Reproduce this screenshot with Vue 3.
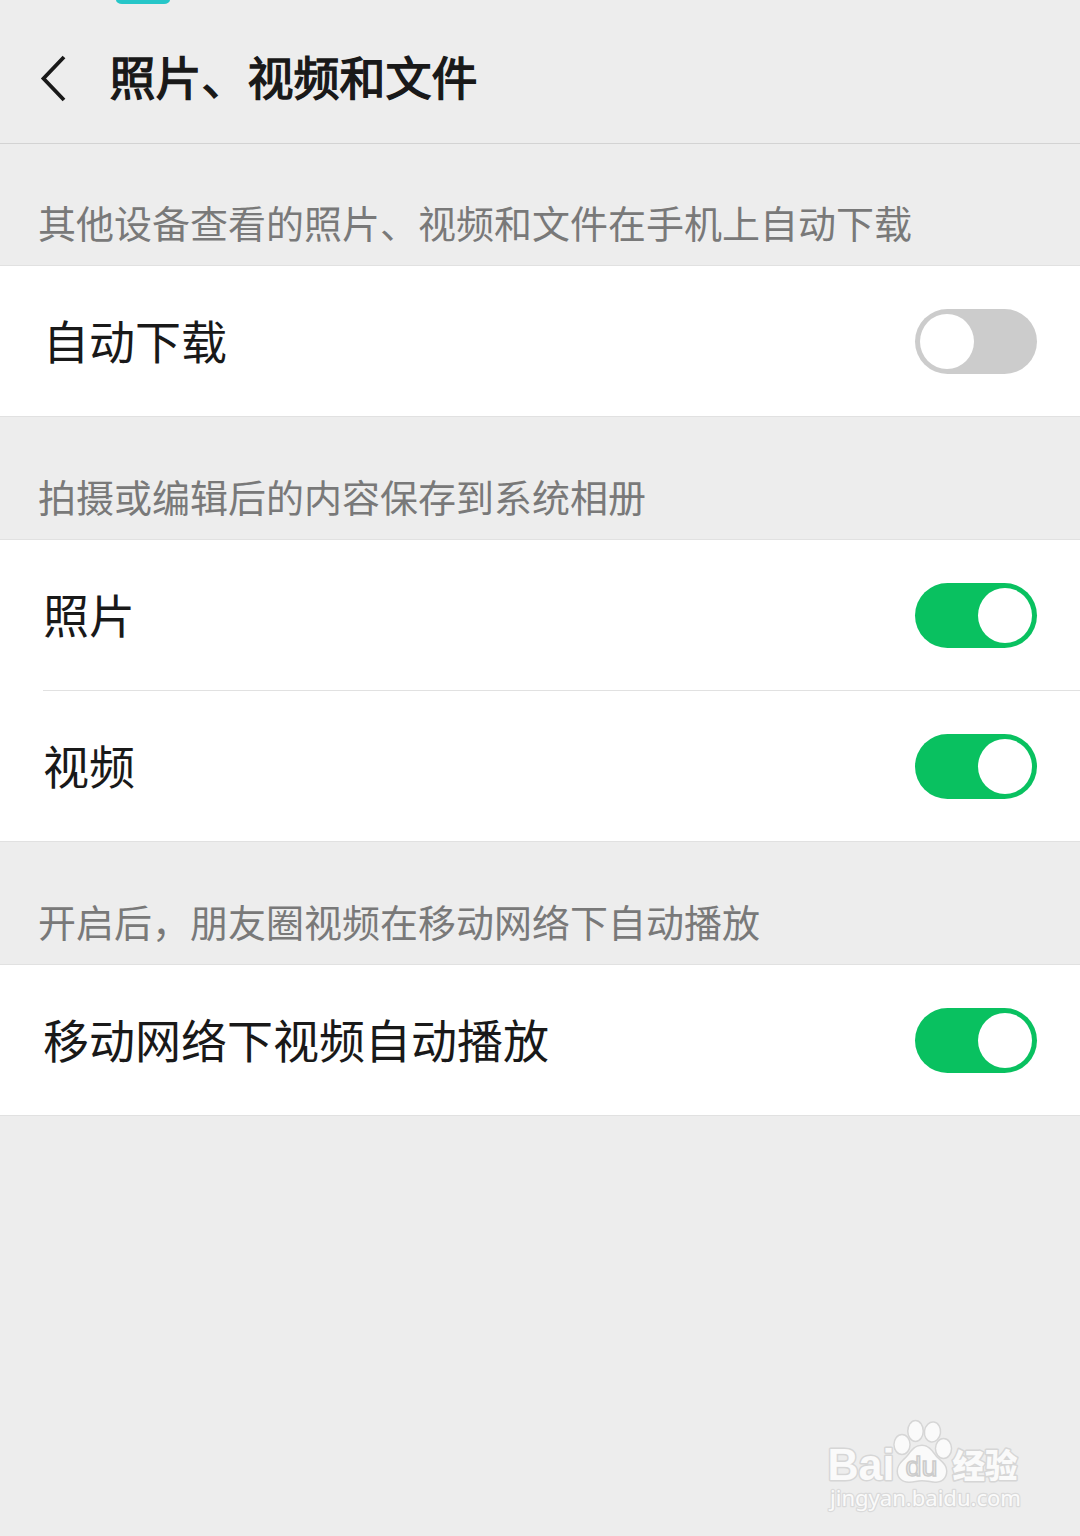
<script setup>
import { ref } from 'vue'

const groups = ref([
  {
    hint: '其他设备查看的照片、视频和文件在手机上自动下载',
    items: [{ label: '自动下载', on: false }],
  },
  {
    hint: '拍摄或编辑后的内容保存到系统相册',
    items: [
      { label: '照片', on: true },
      { label: '视频', on: true },
    ],
  },
  {
    hint: '开启后，朋友圈视频在移动网络下自动播放',
    items: [{ label: '移动网络下视频自动播放', on: true }],
  },
])
</script>

<template>
  <div class="page">
    <div class="notch"></div>
    <header class="header">
      <svg class="back" width="28" height="48" viewBox="0 0 28 48">
        <path d="M25 2 L4.5 23.5 L25 45" />
      </svg>
      <h1>照片、视频和文件</h1>
    </header>

    <section v-for="group in groups" :key="group.hint">
      <p class="hint">{{ group.hint }}</p>
      <ul class="list">
        <li v-for="item in group.items" :key="item.label" class="row">
          <span class="label">{{ item.label }}</span>
          <button
            class="switch"
            :class="{ on: item.on }"
            role="switch"
            :aria-checked="item.on"
            @click="item.on = !item.on"
          >
            <span class="knob"></span>
          </button>
        </li>
      </ul>
    </section>

    <svg class="watermark" width="220" height="115" viewBox="0 0 220 115">
      <g class="mark">
        <text class="latin" x="12.5" y="70" textLength="67" lengthAdjust="spacingAndGlyphs">Bai</text>
        <ellipse cx="87" cy="34.5" rx="7.3" ry="9.3" />
        <ellipse cx="100.5" cy="21" rx="7" ry="9.7" />
        <ellipse cx="117.5" cy="22" rx="7.3" ry="9.3" transform="rotate(8 117.5 22)" />
        <ellipse cx="128.5" cy="38.5" rx="7.3" ry="9.3" />
        <path d="M107 36 C114 36 117 42 121 47 C126 52 131 55 131 61 C131 68 126 72 120 71.5 C115 71 112 70 107 70 C102 70 99 71.5 94 71.5 C87 71.5 83 67 83 61 C83 54 89 51 93 46 C97 41 100 36 107 36 Z" />
        <text class="cjk" x="137.5" y="67.5" textLength="65" lengthAdjust="spacingAndGlyphs">经验</text>
        <text class="url" x="15" y="96" textLength="191" lengthAdjust="spacingAndGlyphs">jingyan.baidu.com</text>
      </g>
      <text class="du" x="90.5" y="65.5" textLength="32" lengthAdjust="spacingAndGlyphs">du</text>
    </svg>
  </div>
</template>

<style>
body {
  margin: 0;
  background: #ededed;
}
</style>

<style scoped>
.page {
  position: relative;
  height: 1536px;
  overflow: hidden;
  background: #ededed;
  color: #191919;
  font-family: "Noto Sans CJK SC", sans-serif;
}

.notch {
  position: absolute;
  top: 0;
  left: 116px;
  width: 54px;
  height: 4px;
  border-radius: 0 0 6px 6px / 0 0 4px 4px;
  background: #26c6c8;
}

.header {
  display: flex;
  align-items: center;
  box-sizing: border-box;
  height: 144px;
  padding: 14px 0 0 39px;
  border-bottom: 1px solid #d3d3d3;
}

.back {
  fill: none;
  stroke: #191919;
  stroke-width: 3.8;
}

/* regular weight thickened with a stroke, lighter than the real bold */
h1 {
  margin: 0 0 8px 42.5px;
  font-size: 46px;
  font-weight: 400;
  line-height: 60px;
  -webkit-text-stroke: 1.4px #191919;
}

.hint {
  box-sizing: border-box;
  height: 121px;
  margin: 0;
  padding: 48px 38px 0;
  color: #797979;
  font-size: 38px;
  line-height: 60px;
}

section + section .hint {
  height: 122px;
  padding-top: 49px;
}

.list {
  margin: 0;
  padding: 0;
  list-style: none;
  background: #fff;
  border-top: 1px solid #e1e1e1;
  border-bottom: 1px solid #e1e1e1;
}

.row {
  display: flex;
  align-items: center;
  justify-content: space-between;
  height: 150px;
  margin-left: 43px;
  padding-right: 43px;
}

.row + .row {
  border-top: 1px solid #e1e1e1;
}

.label {
  padding-bottom: 4px;
  font-size: 46px;
  line-height: 60px;
}

.switch {
  display: flex;
  width: 122px;
  height: 65px;
  padding: 5px;
  border: 0;
  border-radius: 33px;
  background: #ccc;
}

.switch.on {
  justify-content: flex-end;
  background: #09c160;
}

.knob {
  width: 54px;
  height: 55px;
  border-radius: 50%;
  background: #fff;
}

.watermark {
  position: absolute;
  left: 815px;
  top: 1410px;
}

.mark {
  fill: #fafafa;
  stroke: #d6d6d6;
  stroke-width: 3;
  stroke-linejoin: round;
  paint-order: stroke;
}

.latin {
  font: 700 44px "Liberation Sans", sans-serif;
}

.cjk {
  font: 900 33px "Noto Sans CJK SC", sans-serif;
}

.url {
  stroke: #dadada;
  stroke-width: 2.4;
  font: 400 21px "Noto Sans", sans-serif;
}

.du {
  fill: #ececec;
  stroke: #cbcbcb;
  stroke-width: 1.5;
  font: 400 28px "Liberation Sans", sans-serif;
}
</style>
